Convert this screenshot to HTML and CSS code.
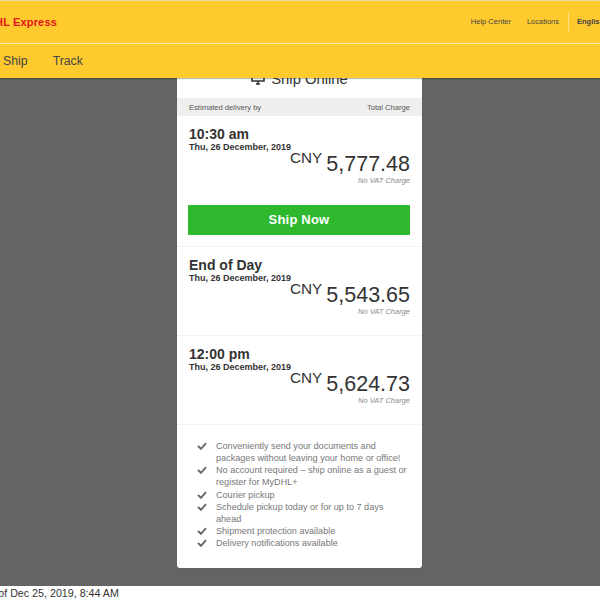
FILE: index.html
```html
<!DOCTYPE html>
<html lang="en">
<head>
<meta charset="utf-8">
<title>DHL Express</title>
<link rel="stylesheet" href="styles.css">
</head>
<body>
<div class="page">
  <header class="header">
    <div class="top-bar">
      <div class="brand">DHL Express</div>
      <nav class="util-nav">
        <span class="util-link help">Help Center</span>
        <span class="util-link">Locations</span>
        <span class="lang">English</span>
      </nav>
    </div>
    <nav class="main-nav">
      <span>Ship</span>
      <span>Track</span>
    </nav>
  </header>
  <main class="stage">
    <section class="card">
      <h2 class="card-title">
        <svg class="monitor" viewBox="0 0 14 13" width="14" height="13"><path d="M1 1.5h12v7.5H1zM5 12h4M7 9v3" fill="none" stroke="#333" stroke-width="1.6"/></svg>
        Ship Online
      </h2>
      <div class="table-head"><span>Estimated delivery by</span><span>Total Charge</span></div>
      <article class="option option-first">
        <div class="time">10:30 am</div>
        <div class="date">Thu, 26 December, 2019</div>
        <div class="price"><span class="cur">CNY</span><span class="amount">5,777.48</span></div>
        <div class="vat">No VAT Charge</div>
        <div class="ship-btn">Ship Now</div>
      </article>
      <article class="option">
        <div class="time">End of Day</div>
        <div class="date">Thu, 26 December, 2019</div>
        <div class="price"><span class="cur">CNY</span><span class="amount">5,543.65</span></div>
        <div class="vat">No VAT Charge</div>
      </article>
      <article class="option">
        <div class="time">12:00 pm</div>
        <div class="date">Thu, 26 December, 2019</div>
        <div class="price"><span class="cur">CNY</span><span class="amount">5,624.73</span></div>
        <div class="vat">No VAT Charge</div>
      </article>
      <ul class="features">
        <li><svg class="check" viewBox="0 0 10 8"><path d="M1 4l3 2.8L9 1.2" fill="none" stroke="#666" stroke-width="1.9"/></svg><span>Conveniently send your documents and packages without leaving your home or office!</span></li>
        <li><svg class="check" viewBox="0 0 10 8"><path d="M1 4l3 2.8L9 1.2" fill="none" stroke="#666" stroke-width="1.9"/></svg><span>No account required – ship online as a guest or register for MyDHL+</span></li>
        <li><svg class="check" viewBox="0 0 10 8"><path d="M1 4l3 2.8L9 1.2" fill="none" stroke="#666" stroke-width="1.9"/></svg><span>Courier pickup</span></li>
        <li><svg class="check" viewBox="0 0 10 8"><path d="M1 4l3 2.8L9 1.2" fill="none" stroke="#666" stroke-width="1.9"/></svg><span>Schedule pickup today or for up to 7 days ahead</span></li>
        <li><svg class="check" viewBox="0 0 10 8"><path d="M1 4l3 2.8L9 1.2" fill="none" stroke="#666" stroke-width="1.9"/></svg><span>Shipment protection available</span></li>
        <li><svg class="check" viewBox="0 0 10 8"><path d="M1 4l3 2.8L9 1.2" fill="none" stroke="#666" stroke-width="1.9"/></svg><span>Delivery notifications available</span></li>
      </ul>
    </section>
  </main>
  <footer class="stamp">as of Dec 25, 2019, 8:44 AM</footer>
</div>
</body>
</html>
```
FILE: styles.css
```css
html, body {
  margin: 0;
  height: 600px;
  overflow: hidden;
  background: #fff;
}
.page {
  width: 640px;
  margin-left: -20px;
  font-family: "Liberation Sans", Arial, sans-serif;
  color: #333;
}
.header {
  position: relative;
  z-index: 2;
  height: 77px;
  border-top: 1px solid #e8d9a8;
  background-color: #ffca2e;
  box-shadow: 0 1px 1px rgba(0, 0, 0, .25);
}
.top-bar {
  height: 42px;
  display: flex;
  justify-content: space-between;
  align-items: center;
  border-bottom: 1px solid #ffe9a0;
}
.brand {
  margin-left: 7px;
  font-size: 11px;
  font-weight: bold;
  color: #e3151f;
  letter-spacing: .15px;
}
.util-nav {
  display: flex;
  align-items: center;
  font-size: 7.5px;
  color: #444;
  margin-top: -1px;
}
.util-link { margin-right: 9px; }
.help { margin-right: 16px; }
.lang {
  font-weight: bold;
  border-left: 1px solid #ffe28a;
  padding: 5px 0 5px 8px;
  width: 43px;
}
.main-nav {
  display: flex;
  gap: 25px;
  padding: 9px 0 0 23px;
  font-size: 12.3px;
  line-height: 16px;
  color: #444;
}
.stage {
  height: 508px;
  background: #646464;
  overflow: hidden;
}
.card {
  width: 245px;
  height: 508px;
  margin: -18px 0 0 197px;
  background: #fff;
  border-radius: 3px;
  box-shadow: 0 0 1px rgba(0, 0, 0, .3);
}
.card-title {
  display: flex;
  justify-content: center;
  align-items: center;
  gap: 6px;
  margin: 0;
  height: 37px;
  padding-bottom: 1px;
  font-size: 14.8px;
  font-weight: normal;
  color: #333;
}
.table-head {
  display: flex;
  justify-content: space-between;
  height: 18px;
  align-items: center;
  padding: 0 12px;
  background: #efefef;
  font-size: 7.6px;
  color: #555;
}
.option {
  height: 89px;
  padding: 11px 12px 0;
  box-sizing: border-box;
  border-bottom: 1px solid #f2f2f2;
}
.option-first { height: 131px; }
.time {
  font-size: 14px;
  line-height: 15px;
  font-weight: bold;
  color: #333;
}
.date {
  font-size: 9px;
  line-height: 10px;
  font-weight: bold;
  color: #333;
}
.price {
  display: flex;
  justify-content: flex-end;
  align-items: flex-start;
  gap: 4px;
  height: 24px;
  margin-top: -3px;
}
.cur {
  font-size: 15.3px;
  line-height: 18px;
}
.amount {
  font-size: 21.5px;
  line-height: 29px;
  margin-top: 1px;
}
.vat {
  text-align: right;
  font-size: 7.5px;
  line-height: 11px;
  margin-top: 2px;
  font-style: italic;
  color: #8a8a8a;
}
.ship-btn {
  height: 30px;
  margin: 19px 0 0 -1px;
  background: #2eb82e;
  border-radius: 1px;
  color: #fff;
  font-size: 13px;
  font-weight: bold;
  text-align: center;
  line-height: 30px;
  letter-spacing: .2px;
}
.features {
  list-style: none;
  margin: 0;
  padding: 15px 13px 0 20px;
  font-size: 9.1px;
  line-height: 12.15px;
  color: #777;
}
.features li {
  display: flex;
  gap: 9px;
}
.check {
  flex: none;
  width: 10px;
  height: 8px;
  margin-top: 2px;
}
.stamp {
  font-size: 10.7px;
  line-height: 14px;
  margin-left: 4px;
  color: #333;
}
```
